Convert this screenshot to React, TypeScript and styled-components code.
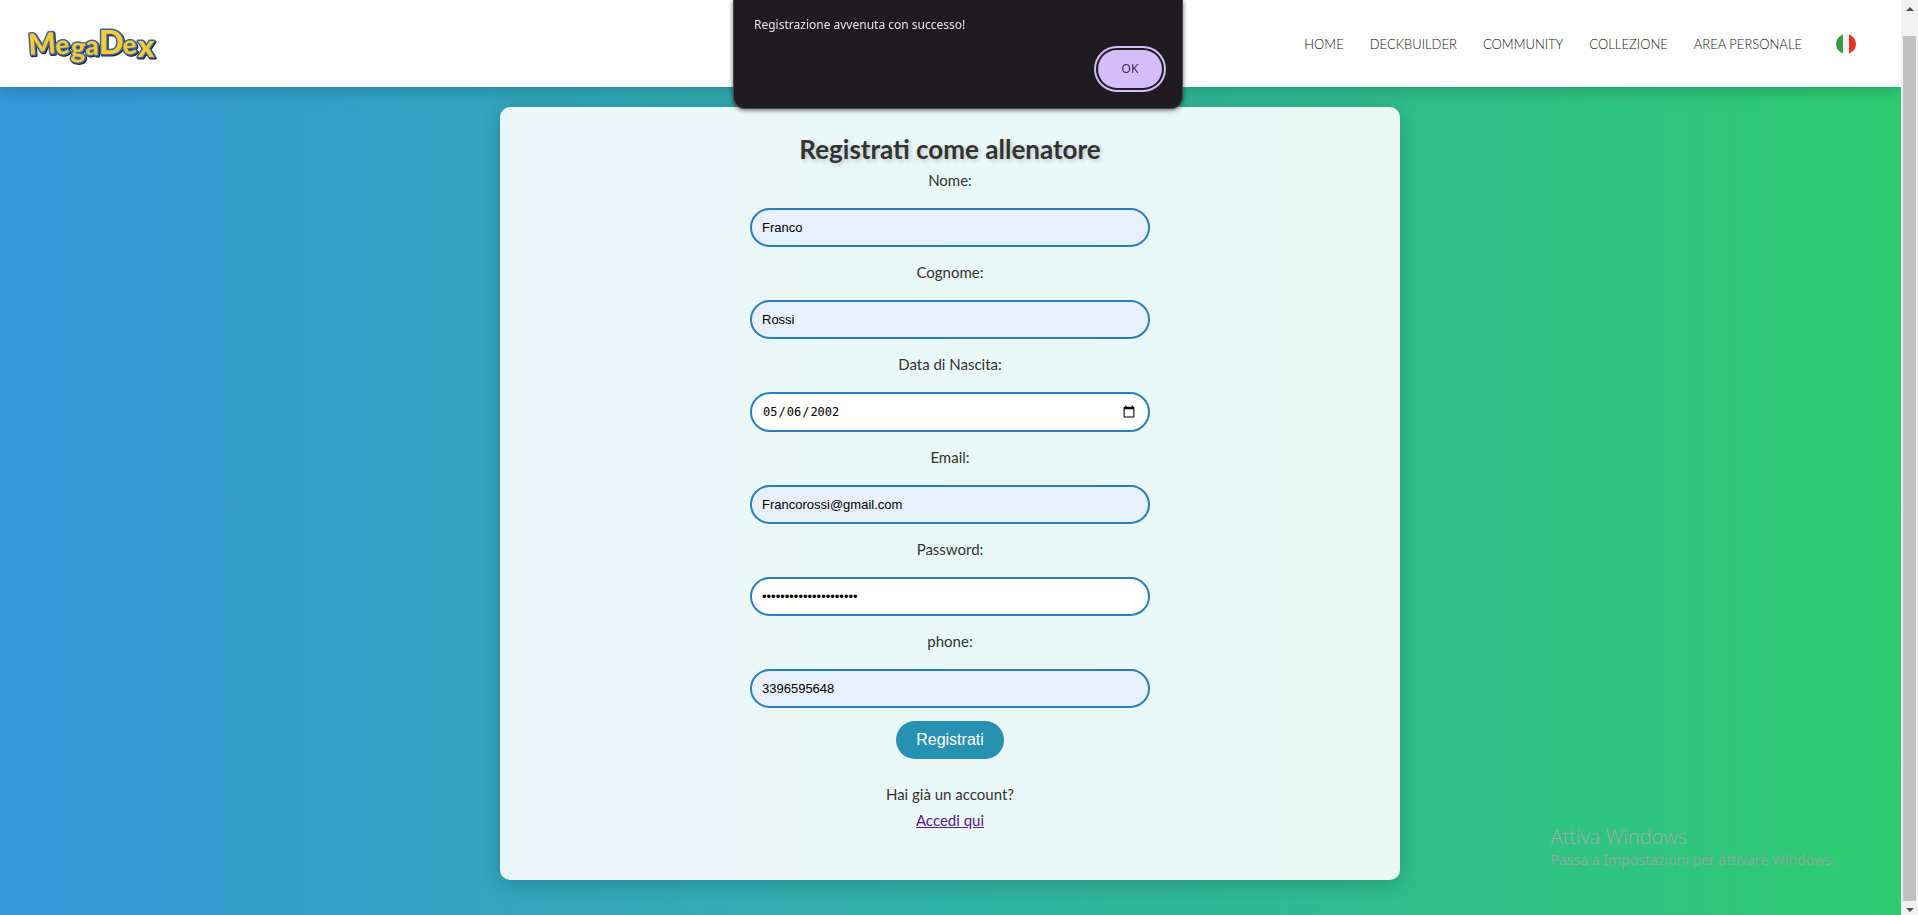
import React, { useState } from "react";
import styled, { createGlobalStyle } from "styled-components";

const GlobalStyle = createGlobalStyle`
  *, *::before, *::after { box-sizing: border-box; }
  body {
    margin: 0;
    color: #333;
    font-family: "Gill Sans MT", "Gill Sans", Lato, sans-serif;
    font-size: 15px;
    line-height: 26px;
    background: #f1f1f1;
  }
`;

const Window = styled.div`
  display: flex;
  height: 100vh;
  overflow: hidden;
`;

const Page = styled.div`
  flex: 1;
  min-width: 0;
  display: flex;
  flex-direction: column;
  background: linear-gradient(to right, #3498db, #2ecc71);
`;

const Header = styled.header`
  display: flex;
  align-items: center;
  justify-content: space-between;
  height: 87px;
  flex-shrink: 0;
  padding: 0 45px 0 24px;
  background: #fff;
  box-shadow: 0 4px 15px rgba(0, 0, 0, 0.2);
`;

const LogoLink = styled.a`
  display: block;
  line-height: 0;
`;

const LogoDrawing = styled.svg`
  overflow: visible;
  font-family: Lato, sans-serif;
  font-weight: 900;
  line-height: 1;
  filter: drop-shadow(1px 1px 0 #16233f);
`;

const Nav = styled.nav`
  display: flex;
  align-items: center;
  gap: 26px;
`;

const NavLink = styled.a`
  color: #111;
  font-size: 13px;
  font-weight: 300;
  text-decoration: none;
  text-transform: uppercase;
`;

const LanguageButton = styled.button`
  display: flex;
  margin-left: 8px;
  padding: 0;
  border: 0;
  background: none;
`;

const Main = styled.main`
  flex: 1;
  padding: 20px 21px 20px 20px;
`;

const Card = styled.section`
  width: 100%;
  max-width: 900px;
  margin: 0 auto;
  padding: 30px 30px 47px;
  border-radius: 10px;
  background: rgba(255, 255, 255, 0.9);
  box-shadow: 0 4px 20px rgba(0, 0, 0, 0.2);
  text-align: center;
`;

const Title = styled.h1`
  margin: 0 0 6px;
  font-size: 26px;
  line-height: 25px;
  font-weight: 700;
  text-shadow: 2px 2px 4px rgba(0, 0, 0, 0.2);
`;

const Form = styled.form`
  display: flex;
  flex-direction: column;
  align-items: center;
`;

const Field = styled.div`
  display: flex;
  flex-direction: column;
  align-items: center;
  width: 400px;
  max-width: 100%;
  padding-bottom: 13px;
`;

const Label = styled.label`
  line-height: 25px;
  margin-bottom: 15px;
`;

const Input = styled.input<{ $autofilled?: boolean }>`
  width: 100%;
  height: 39px;
  padding: 10px;
  border: 2px solid #2980b9;
  border-radius: 20px;
  background: ${(p) => (p.$autofilled ? "#e8f0fe" : "#fff")};
  color: #000;
  font-family: "Liberation Sans", Arial, sans-serif;
  font-size: 13px;
  outline: none;

  &[type="date"] {
    height: 40px;
    font-family: "DejaVu Sans Mono", monospace;
    font-size: 12px;
  }

  &::-webkit-calendar-picker-indicator {
    font-size: 14px;
  }
`;

const SubmitButton = styled.button`
  height: 38px;
  padding: 0 20px;
  border: 0;
  border-radius: 20px;
  background: #2691b0;
  color: #fff;
  font-family: "Liberation Sans", Arial, sans-serif;
  font-size: 16px;
`;

const LoginPrompt = styled.p`
  display: flex;
  flex-direction: column;
  align-items: center;
  margin: 22px 0 0;
`;

const LoginLink = styled.a`
  color: #551a8b;
`;

const Dialog = styled.div`
  position: fixed;
  top: 0;
  left: 50%;
  z-index: 2;
  display: flex;
  flex-direction: column;
  width: 450px;
  height: 109px;
  margin-left: -226px;
  padding: 15px 20px 20px;
  border: 1px solid #4a474e;
  border-top: 0;
  border-radius: 0 0 12px 12px;
  background: #1f1c21;
  box-shadow: 0 1px 5px rgba(0, 0, 0, 0.6);
  color: #e6e1e5;
  font-family: "Segoe UI", "Noto Sans", sans-serif;
  font-size: 12px;
`;

const DialogText = styled.p`
  margin: 0;
  line-height: 20px;
`;

const DialogButton = styled.button`
  align-self: flex-end;
  width: 64px;
  height: 38px;
  margin-top: auto;
  border: 0;
  border-radius: 19px;
  outline: 2px solid #d6bdfb;
  outline-offset: 2px;
  background: #d6bdfb;
  color: #3b2260;
  font: inherit;
`;

const Watermark = styled.aside`
  position: fixed;
  right: 81px;
  bottom: 45px;
  width: 286px;
  color: rgba(170, 160, 168, 0.75);
  font-family: "Segoe UI", "Noto Sans", sans-serif;
  font-size: 14px;
  line-height: 20px;
  white-space: nowrap;
  pointer-events: none;
`;

const WatermarkTitle = styled.div`
  color: rgba(180, 165, 175, 0.9);
  font-family: "Segoe UI", "Open Sans", sans-serif;
  font-size: 20px;
  line-height: 26px;
  font-weight: 300;
`;

const ScrollTrack = styled.div`
  display: flex;
  flex-direction: column;
  align-items: center;
  width: 17px;
  background: #f1f1f1;
`;

const ScrollArrow = styled.span<{ $down?: boolean }>`
  width: 0;
  height: 0;
  margin: ${(p) => (p.$down ? "7px 0 3px" : "7px 0 0")};
  border: 4px solid transparent;
  border-top: ${(p) => (p.$down ? "4px solid #505050" : "0")};
  border-bottom: ${(p) => (p.$down ? "0" : "4px solid #505050")};
`;

const ScrollThumb = styled.div`
  flex: 1;
  width: 13px;
  margin-top: 25px;
  background: #c1c1c1;
`;

function Logo() {
  return (
    <LogoDrawing width="136" height="60" viewBox="0 0 136 60" role="img" aria-label="MegaDex">
      <text
        x="5"
        y="41"
        rotate="-4 -8 3 0 0 -8 0"
        fill="#f9cb2e"
        stroke="#3c64a4"
        strokeWidth="3"
        strokeLinejoin="round"
        paintOrder="stroke"
      >
        <tspan fontSize="29">M</tspan>
        <tspan fontSize="26">e</tspan>
        <tspan fontSize="28" dy="2">g</tspan>
        <tspan fontSize="26" dy="-2">a</tspan>
        <tspan fontSize="33" dy="-1">D</tspan>
        <tspan fontSize="26" dy="1">e</tspan>
        <tspan fontSize="31" dy="2">x</tspan>
      </text>
    </LogoDrawing>
  );
}

function ItalianFlag() {
  return (
    <svg width="20" height="20" viewBox="0 0 20 20" aria-hidden="true">
      <clipPath id="flag-shape">
        <circle cx="10" cy="10" r="10" />
      </clipPath>
      <g clipPath="url(#flag-shape)">
        <rect width="20" height="20" fill="#f3f3f3" />
        <rect width="7" height="20" fill="#369a43" />
        <rect x="13" width="7" height="20" fill="#ea3323" />
      </g>
    </svg>
  );
}

const navItems = ["Home", "Deckbuilder", "Community", "Collezione", "Area personale"];

const fields = [
  { id: "nome", label: "Nome:", type: "text", value: "Franco", autofilled: true },
  { id: "cognome", label: "Cognome:", type: "text", value: "Rossi", autofilled: true },
  { id: "nascita", label: "Data di Nascita:", type: "date", value: "2002-05-06", autofilled: false },
  { id: "email", label: "Email:", type: "email", value: "Francorossi@gmail.com", autofilled: true },
  { id: "password", label: "Password:", type: "password", value: "allenatore-pokemon-02", autofilled: false },
  { id: "phone", label: "phone:", type: "tel", value: "3396595648", autofilled: true },
];

export default function App() {
  const [open, setOpen] = useState(true);
  return (
    <Window>
      <GlobalStyle />
      <Page>
        <Header>
          <LogoLink href="#home">
            <Logo />
          </LogoLink>
          <Nav>
            {navItems.map((item) => (
              <NavLink key={item} href="#">
                {item}
              </NavLink>
            ))}
            <LanguageButton type="button" aria-label="Italiano">
              <ItalianFlag />
            </LanguageButton>
          </Nav>
        </Header>
        <Main>
          <Card>
            <Title>Registrati come allenatore</Title>
            <Form onSubmit={(e) => e.preventDefault()}>
              {fields.map((f) => (
                <Field key={f.id}>
                  <Label htmlFor={f.id}>{f.label}</Label>
                  <Input id={f.id} type={f.type} defaultValue={f.value} $autofilled={f.autofilled} />
                </Field>
              ))}
              <SubmitButton type="submit">Registrati</SubmitButton>
            </Form>
            <LoginPrompt>
              Hai già un account?
              <LoginLink href="#login">Accedi qui</LoginLink>
            </LoginPrompt>
          </Card>
        </Main>
      </Page>
      <ScrollTrack aria-hidden="true">
        <ScrollArrow />
        <ScrollThumb />
        <ScrollArrow $down />
      </ScrollTrack>
      {open && (
        <Dialog role="alertdialog" aria-labelledby="dialog-text">
          <DialogText id="dialog-text">Registrazione avvenuta con successo!</DialogText>
          <DialogButton type="button" onClick={() => setOpen(false)}>
            OK
          </DialogButton>
        </Dialog>
      )}
      <Watermark>
        <WatermarkTitle>Attiva Windows</WatermarkTitle>
        Passa a Impostazioni per attivare Windows.
      </Watermark>
    </Window>
  );
}
